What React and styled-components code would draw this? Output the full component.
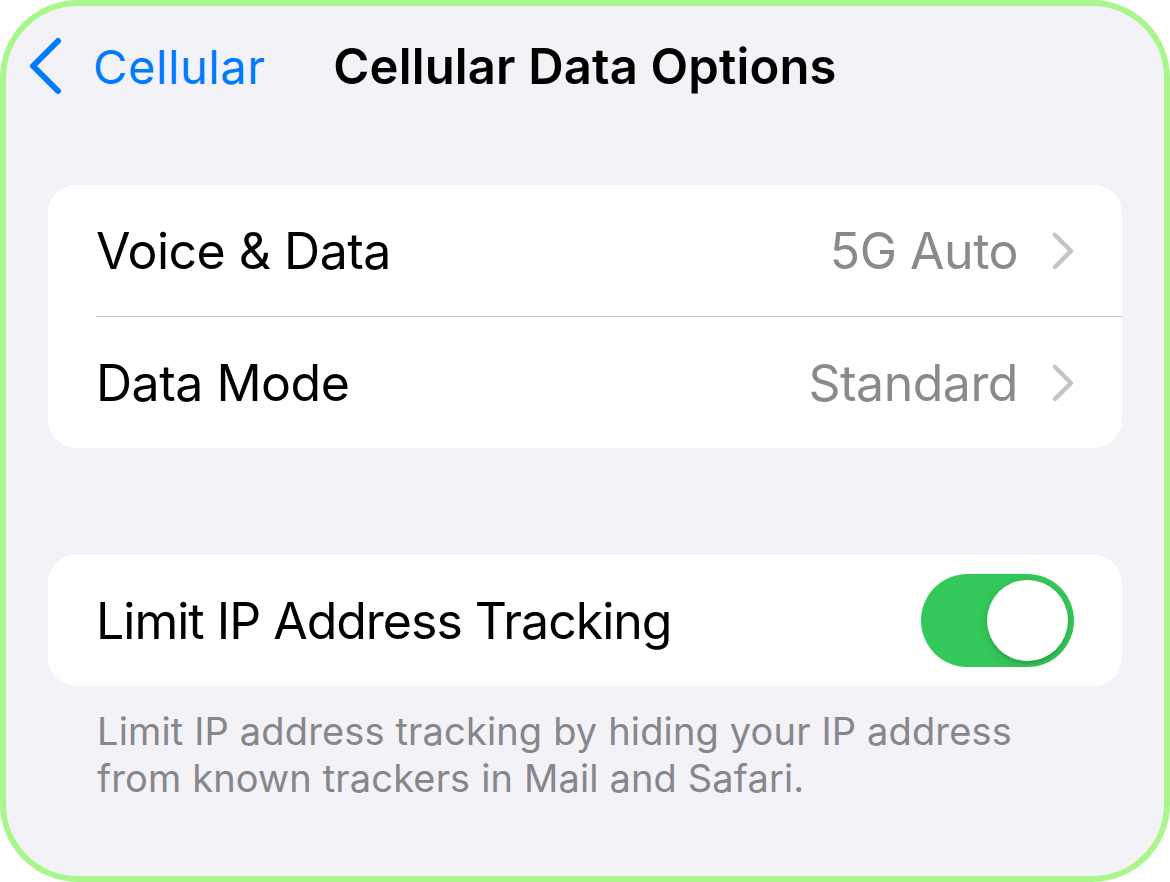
import React from 'react'
import styled, { createGlobalStyle } from 'styled-components'

const GlobalStyle = createGlobalStyle`
  html, body {
    margin: 0;
    padding: 0;
    background: #fff;
  }
  body {
    font-family: Inter, 'Noto Sans', 'Liberation Sans', sans-serif;
    -webkit-font-smoothing: antialiased;
  }
`

const Frame = styled.div`
  box-sizing: border-box;
  width: 1170px;
  height: 882px;
  border: 6px solid #a9f78c;
  border-radius: 78px;
  background: #f2f2f7;
  display: flex;
  flex-direction: column;
  overflow: hidden;
`

const NavBar = styled.div`
  height: 120px;
  display: grid;
  grid-template-columns: 1fr auto 1fr;
  align-items: center;
  padding: 0 20px;
`

const BackButton = styled.div`
  display: flex;
  align-items: center;
  gap: 29px;
  color: #007aff;
  font-size: 47px;
  letter-spacing: 0.6px;
`

const Title = styled.div`
  font-size: 49px;
  font-weight: 600;
  color: #000;
  letter-spacing: 0.15px;
`

const Card = styled.div`
  margin: ${(p) => p.$top}px 42px 0;
  background: #fff;
  border-radius: 28px;
  overflow: hidden;
`

const Row = styled.div`
  height: 131px;
  display: flex;
  align-items: center;
  padding: 0 48px 0 48px;
`

const Label = styled.div`
  flex: 1;
  font-size: 50px;
  color: #000;
  letter-spacing: ${(p) => (p.$tight ? '-1px' : '-0.5px')};
`

const Value = styled.div`
  font-size: 50px;
  color: #8a8a8e;
  letter-spacing: -0.5px;
  margin-right: 34px;
`

const Divider = styled.div`
  height: 1px;
  background: #c6c6c8;
  margin-left: 48px;
`

const Toggle = styled.div`
  width: 153px;
  height: 93px;
  border-radius: 47px;
  background: #34c759;
  position: relative;
  flex-shrink: 0;
`

const Knob = styled.div`
  position: absolute;
  top: 6px;
  right: 6px;
  width: 81px;
  height: 81px;
  border-radius: 50%;
  background: #fff;
  box-shadow: 0 3px 8px rgba(0, 0, 0, 0.15), 0 3px 1px rgba(0, 0, 0, 0.06);
`

const Footer = styled.p`
  margin: 22px 127px 0 91px;
  font-size: 38px;
  line-height: 47px;
  color: #86868b;
  letter-spacing: 0.15px;
`

const BackChevron = () => (
  <svg width="38" height="58" viewBox="0 0 38 58" fill="none">
    <path d="M32 4 L7 29 L32 54" stroke="#007aff" strokeWidth="6" strokeLinecap="round" strokeLinejoin="round" />
  </svg>
)

const Chevron = () => (
  <svg width="22" height="38" viewBox="0 0 22 38" fill="none">
    <path d="M3 3 L19 19 L3 35" stroke="#c4c4c7" strokeWidth="4.5" strokeLinecap="round" strokeLinejoin="round" />
  </svg>
)

const LinkRow = ({ label, value }) => (
  <Row>
    <Label>{label}</Label>
    <Value>{value}</Value>
    <Chevron />
  </Row>
)

export default function App() {
  return (
    <>
      <GlobalStyle />
      <Frame>
        <NavBar>
          <BackButton>
            <BackChevron />
            <span>Cellular</span>
          </BackButton>
          <Title>Cellular Data Options</Title>
          <div />
        </NavBar>
        <Card $top={59}>
          <LinkRow label="Voice & Data" value="5G Auto" />
          <Divider />
          <LinkRow label="Data Mode" value="Standard" />
        </Card>
        <Card $top={107}>
          <Row>
            <Label $tight>Limit IP Address Tracking</Label>
            <Toggle>
              <Knob />
            </Toggle>
          </Row>
        </Card>
        <Footer>
          Limit IP address tracking by hiding your IP address from known trackers in Mail and Safari.
        </Footer>
      </Frame>
    </>
  )
}
